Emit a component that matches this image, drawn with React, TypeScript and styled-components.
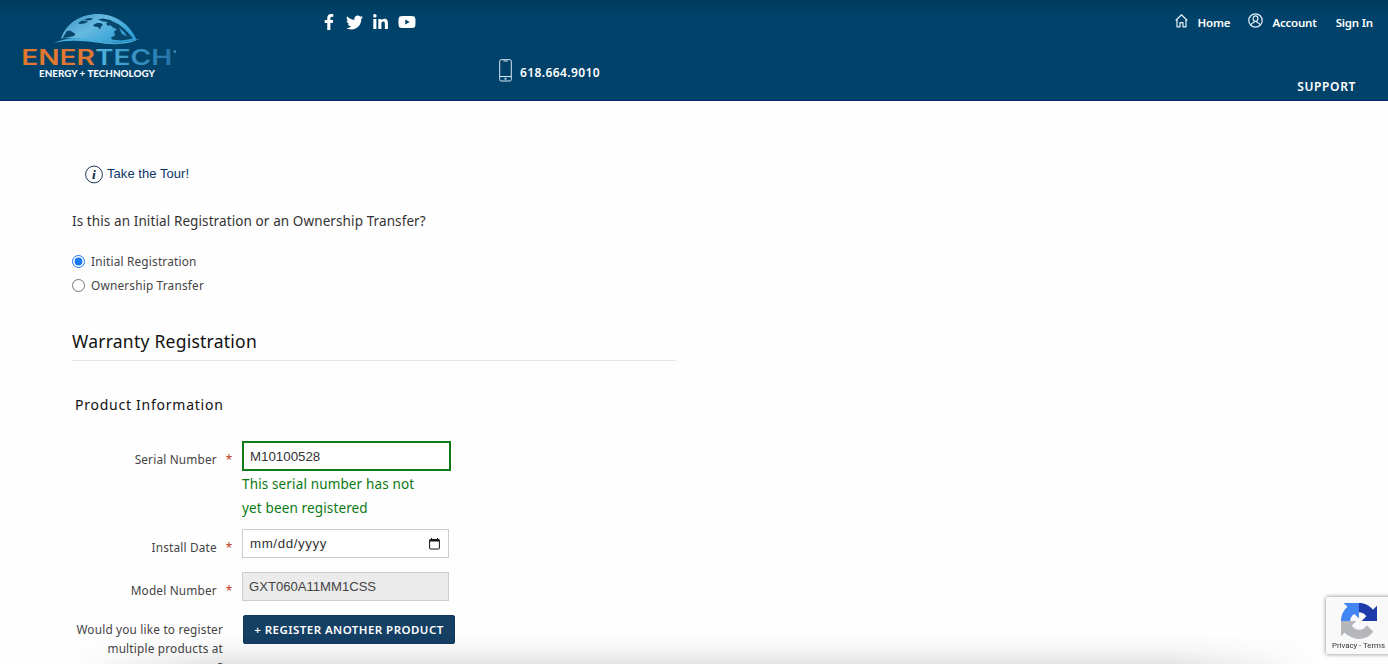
import styled, { createGlobalStyle } from 'styled-components'
import { FC, ReactNode, useState } from 'react'
import { FaFacebookF, FaTwitter, FaLinkedinIn, FaYoutube } from 'react-icons/fa'

type FieldType = {
	label: string
	height: number
	children: ReactNode
}

const Logo = () => (
	<svg width='160' height='70' viewBox='20 10 160 70'>
		<defs>
			<linearGradient id='globe' x1='0' y1='0' x2='1' y2='0.6'>
				<stop offset='0' stopColor='#3a92c4' />
				<stop offset='0.5' stopColor='#66b9e0' />
				<stop offset='1' stopColor='#2f9fd6' />
			</linearGradient>
			<linearGradient id='word' gradientUnits='userSpaceOnUse' x1='23' y1='0' x2='171' y2='0'>
				<stop offset='0' stopColor='#e4762c' />
				<stop offset='0.495' stopColor='#dd7836' />
				<stop offset='0.5' stopColor='#50b4df' />
				<stop offset='1' stopColor='#2573a9' />
			</linearGradient>
		</defs>
		<path
			d='M61 38.5C66 23 81 14 97.5 14C115 14 130 24 136.500 39.500C121 44 106 42 92 40.500C80 38.500 70 38 61 38.500Z'
			fill='url(#globe)'
		/>
		<path
			d='M53.500 43C70 36 85 38 97 40.500C113 43.500 126 43 140 38.500C126 46 110 44.500 96 42.500C81 40.500 68 39.500 53.500 43Z'
			fill='#48aedb'
		/>
		<g fill='#07466d'>
			<path d='M67 31L70 30.500L75.500 34L74 36L70 37L62.500 38.200Z' />
			<path d='M78 23L82 20.500L86 21L88 22L84 23.500L80 24Z' />
			<path d='M84 19.500L89 18L93 18.500L91 20L87 20.500Z' />
			<path d='M93 25L97 23L101 23L103 25L101 26.500L100 29.500L98 27L94 26.500Z' />
			<path d='M98 19.500L103 18.500L110 20L119 24.500L125 29.500L131 36L133 38.500L128 39.500L121 40.500L112 39.500L111 37.500L115 35.500L114 31.500L117 29.500L113 27.500L110 25L108 26L106 23.500L108 22L103 21.500Z' />
		</g>
		<path d='M119 27.500L124 32L127 36.500L122 34Z' fill='#3ba5d8' />
		<text x='21.200' y='64.700' textLength='151' lengthAdjust='spacingAndGlyphs' fill='url(#word)' fontFamily='Inter, sans-serif' fontSize='21.200' fontWeight='600'>
			ENERTECH
		</text>
		<circle cx='174.800' cy='51.500' r='1.500' fill='#3587b9' />
		<text x='39' y='77' textLength='116' lengthAdjust='spacingAndGlyphs' fill='#f4f9fd' fontFamily='Lato, sans-serif' fontSize='9.800' fontWeight='900'>
			ENERGY + TECHNOLOGY
		</text>
	</svg>
)

const PhoneIcon = () => (
	<svg width='13' height='23' viewBox='0 0 13 23' fill='none' stroke='#d5e7f5'>
		<rect x='0.700' y='0.700' width='11.600' height='21.300' rx='1.500' />
		<path d='M1 17.500H12M4.500 2H8.500' />
		<circle cx='6.500' cy='19.700' r='0.800' />
	</svg>
)

const HomeIcon = () => (
	<svg width='13' height='14' viewBox='0 0 13 14' fill='none' stroke='#e5f0f8' strokeWidth='1.200' strokeLinejoin='round'>
		<path d='M0.700 6.500L6.500 0.800L12.300 6.500M2 5.500V12.800H5V8.700H8V12.800H11V5.500' />
	</svg>
)

const AccountIcon = () => (
	<svg width='15' height='15' viewBox='0 0 15 15' fill='none' stroke='#e5f0f8' strokeWidth='1.200'>
		<circle cx='7.500' cy='7.500' r='6.700' />
		<ellipse cx='7.500' cy='5.600' rx='2.400' ry='2.800' />
		<path d='M2.700 12C3.300 10.300 4.600 9.800 6.200 9.300V8.200M8.800 8.200V9.300C10.400 9.800 11.700 10.300 12.300 12' />
	</svg>
)

const InfoIcon = () => (
	<svg width='19' height='19' viewBox='0 0 19 19'>
		<circle cx='10' cy='9.500' r='8.400' fill='none' stroke='#1c3556' strokeWidth='1' />
		<text x='10' y='13.800' textAnchor='middle' fill='#0c2748' fontFamily='Liberation Serif, serif' fontSize='13.500' fontStyle='italic' fontWeight='700'>
			i
		</text>
	</svg>
)

const CalendarIcon = () => (
	<svg width='11' height='12' viewBox='0 0 11 12' fill='none' stroke='#111'>
		<rect x='0.600' y='1.600' width='9.800' height='9.400' rx='0.800' />
		<path d='M0.500 2.500H10.500' strokeWidth='2' />
		<path d='M2.500 0V2M8.500 0V2' />
	</svg>
)

const CaptchaIcon = () => (
	<svg width='36' height='36' viewBox='0 0 64 64'>
		<path
			fill='#1c3aa9'
			d='M64 31.955l-.033-1.370V4.687l-7.160 7.160C50.948 4.674 42.033.093 32.050.093c-10.400 0-19.622 4.960-25.458 12.640l11.736 11.860a15.550 15.550 0 0 1 4.754-5.334c2.050-1.600 4.952-2.906 8.968-2.906.485 0 .860.057 1.135.163 4.976.393 9.288 3.140 11.828 7.124l-8.307 8.307L64 31.953'
		/>
		<path
			fill='#4285f4'
			d='M31.862.094l-1.370.033H4.594l7.160 7.160C4.580 13.147 0 22.060 0 32.046c0 10.400 4.960 19.622 12.640 25.458L24.500 45.768a15.550 15.550 0 0 1-5.334-4.754c-1.600-2.050-2.906-4.952-2.906-8.968 0-.485.057-.860.163-1.135.393-4.976 3.140-9.288 7.124-11.828l8.307 8.307L31.860.095'
		/>
		<path
			fill='#b5b7ba'
			d='M.001 32.045l.033 1.370v25.898l7.160-7.160c5.860 7.173 14.774 11.754 24.760 11.754 10.400 0 19.622-4.960 25.458-12.640l-11.736-11.860a15.550 15.550 0 0 1-4.754 5.334c-2.050 1.600-4.952 2.906-8.968 2.906-.485 0-.860-.057-1.135-.163-4.976-.393-9.288-3.140-11.828-7.124l8.307-8.307c-10.522.040-22.400.066-27.295-.005'
		/>
	</svg>
)

const Field: FC<FieldType> = (props: FieldType) => (
	<Row $height={props.height}>
		<Label>
			{props.label}
			<Star>*</Star>
		</Label>
		<Control>{props.children}</Control>
	</Row>
)

export default function App() {
	const [kind, setKind] = useState('initial')
	const [serial, setSerial] = useState('M10100528')

	return (
		<Page>
			<GlobalStyle />
			<Header>
				<LogoBox>
					<Logo />
				</LogoBox>
				<Socials>
					<FaFacebookF size={16} />
					<FaTwitter size={17} />
					<FaLinkedinIn size={17} />
					<FaYoutube size={18} />
				</Socials>
				<Phone>
					<PhoneIcon />
					<span>618.664.9010</span>
				</Phone>
				<Right>
					<Nav>
						<HomeIcon />
						<NavText $left={10}>Home</NavText>
						<NavIcon>
							<AccountIcon />
						</NavIcon>
						<NavText $left={9}>Account</NavText>
						<NavText $left={19}>Sign In</NavText>
					</Nav>
					<Support>SUPPORT</Support>
				</Right>
			</Header>
			<Main>
				<Tour>
					<InfoIcon />
					<span>Take the Tour!</span>
				</Tour>
				<Question>Is this an Initial Registration or an Ownership Transfer?</Question>
				<Radio>
					<input type='radio' checked={kind === 'initial'} onChange={() => setKind('initial')} />
					Initial Registration
				</Radio>
				<Radio>
					<input type='radio' checked={kind === 'transfer'} onChange={() => setKind('transfer')} />
					Ownership Transfer
				</Radio>
				<Title>Warranty Registration</Title>
				<SubTitle>Product Information</SubTitle>
				<Field label='Serial Number' height={88}>
					<SerialInput value={serial} onChange={(e) => setSerial(e.currentTarget.value)} />
					<Message>This serial number has not yet been registered</Message>
				</Field>
				<Field label='Install Date' height={43}>
					<DateBox>
						<span>mm/dd/yyyy</span>
						<CalendarIcon />
					</DateBox>
				</Field>
				<Field label='Model Number' height={43}>
					<ModelInput value='GXT060A11MM1CSS' readOnly />
				</Field>
				<Row $height={60}>
					<MultiLabel>
						Would you like to register
						<br />
						multiple products at
						<br />?
					</MultiLabel>
					<Control>
						<AddButton>+ REGISTER ANOTHER PRODUCT</AddButton>
					</Control>
				</Row>
			</Main>
			<BottomShade />
			<Captcha>
				<CaptchaIcon />
				<CaptchaText>Privacy - Terms</CaptchaText>
			</Captcha>
		</Page>
	)
}

const GlobalStyle = createGlobalStyle`
	* {
		box-sizing: border-box;
	}
	body {
		margin: 0;
		overflow: hidden;
		background-color: #fefefe;
		font-family: 'Noto Sans', sans-serif;
		color: #333;
	}
	svg {
		display: block;
		flex-shrink: 0;
	}
`
const Page = styled.div`
	height: 664px;
	overflow: hidden;
`
const Header = styled.header`
	display: flex;
	height: 101px;
	color: #ffffff;
	background: linear-gradient(#003a5f 0, #00426a 14px, #00426a 100%);
	border-bottom: 1px solid #11217a;
`
const LogoBox = styled.div`
	padding: 10px 0 0 20px;
	width: 321px;
`
const Socials = styled.div`
	display: flex;
	align-items: center;
	gap: 9px;
	width: 178px;
	height: 44px;
`
const Phone = styled.div`
	display: flex;
	align-items: flex-start;
	gap: 8px;
	padding-top: 59px;
	font-size: 12px;
	font-weight: 600;
	letter-spacing: 0.4px;
	line-height: 27px;
`
const Right = styled.div`
	display: flex;
	flex-direction: column;
	align-items: flex-end;
	margin-left: auto;
	padding: 14px 15px 0 0;
`
const Nav = styled.nav`
	display: flex;
	align-items: flex-start;
	height: 63px;
	font-size: 11.5px;
	font-weight: 600;
	letter-spacing: -0.2px;
	line-height: 18px;
`
const NavText = styled.span<{ $left: number }>`
	margin-left: ${(props) => props.$left}px;
`
const NavIcon = styled.span`
	margin: -1px 0 0 18px;
`
const Support = styled.div`
	margin-right: 17px;
	font-size: 12px;
	font-weight: 600;
	letter-spacing: 0.65px;
	line-height: 20px;
`
const Main = styled.main`
	padding: 64px 0 0 72px;
`
const Tour = styled.div`
	display: flex;
	gap: 4px;
	height: 19px;
	margin-left: 12px;
	font-family: 'Liberation Sans', sans-serif;
	font-size: 13px;
	letter-spacing: 0.05px;
	line-height: 17px;
	color: #0b3566;
`
const Question = styled.p`
	margin: 25px 0 16px;
	font-size: 13.5px;
	letter-spacing: 0.1px;
	line-height: 24px;
`
const Radio = styled.label`
	display: flex;
	align-items: center;
	gap: 6px;
	height: 24px;
	font-size: 11.8px;
	letter-spacing: 0.2px;
	color: #444;
	& input {
		width: 13px;
		height: 13px;
		margin: 0;
		accent-color: #1877f2;
	}
`
const Title = styled.h2`
	width: 604px;
	height: 34px;
	margin: 30px 0 32px;
	border-bottom: 1px solid #e6e6e6;
	font-size: 17.5px;
	font-weight: 400;
	letter-spacing: 0.24px;
	line-height: 29px;
	color: #111;
`
const SubTitle = styled.h3`
	margin: 0 0 24px 3px;
	font-size: 14px;
	font-weight: 400;
	letter-spacing: 0.75px;
	line-height: 24px;
	color: #111;
`
const Row = styled.div<{ $height: number }>`
	display: flex;
	align-items: flex-start;
	height: ${(props) => props.$height}px;
`
const Label = styled.label`
	display: flex;
	justify-content: flex-end;
	width: 160.5px;
	padding-top: 8px;
	font-size: 11.8px;
	letter-spacing: 0.18px;
	line-height: 20px;
	color: #444;
`
const Star = styled.span`
	margin-left: 9px;
	color: #c0392b;
`
const Control = styled.div`
	margin-left: auto;
	width: 1146px;
`
const SerialInput = styled.input`
	display: block;
	width: 209px;
	height: 30px;
	padding: 0 6px;
	border: 2px solid #0f7a16;
	outline: none;
	background-color: #ffffff;
	font-family: 'Liberation Sans', sans-serif;
	font-size: 13.3px;
	color: #333;
`
const Message = styled.p`
	width: 190px;
	margin: 1px 0 0;
	font-size: 13.5px;
	letter-spacing: 0.14px;
	line-height: 24px;
	color: #0a7a12;
`
const DateBox = styled.div`
	display: flex;
	align-items: center;
	justify-content: space-between;
	width: 207px;
	height: 29px;
	padding: 0 8px 0 7px;
	border: 1px solid #ccc;
	background-color: #ffffff;
	font-family: 'Liberation Sans', sans-serif;
	font-size: 13.3px;
	letter-spacing: 0.6px;
`
const ModelInput = styled.input`
	display: block;
	width: 207px;
	height: 29px;
	padding: 0 6px;
	border: 1px solid #ccc;
	background-color: #ebebeb;
	font-family: 'Liberation Sans', sans-serif;
	font-size: 13.1px;
	color: #444;
`
const MultiLabel = styled.div`
	width: 151px;
	padding-top: 5px;
	font-size: 11.8px;
	letter-spacing: 0.19px;
	line-height: 19px;
	text-align: right;
	white-space: nowrap;
	color: #444;
`
const AddButton = styled.button`
	display: block;
	width: 212px;
	height: 29px;
	margin-left: 1px;
	padding: 0;
	border: 1px solid #123a5c;
	border-radius: 2px;
	background-color: #153f63;
	font-family: 'Noto Sans', sans-serif;
	font-size: 11.5px;
	font-weight: 600;
	letter-spacing: 0.45px;
	color: #ffffff;
	white-space: nowrap;
`
// soft fade along the lower edge of the window
const BottomShade = styled.div`
	position: fixed;
	left: 70px;
	right: 70px;
	bottom: 0;
	height: 30px;
	background: linear-gradient(rgba(0, 0, 0, 0), rgba(0, 0, 0, 0.04) 55%, rgba(0, 0, 0, 0.1));
	mask-image: linear-gradient(90deg, transparent, #000 12%, #000 88%, transparent);
	pointer-events: none;
`
const Captcha = styled.div`
	position: fixed;
	right: -8px;
	bottom: 10px;
	display: flex;
	flex-direction: column;
	width: 70px;
	height: 57px;
	padding: 6px 0 0 15px;
	border-radius: 2px;
	background-color: #f9f9f9;
	box-shadow: 0 0 4px #808080;
`
const CaptchaText = styled.span`
	margin: 2px 0 0 -9px;
	font-family: Roboto, sans-serif;
	font-size: 7.8px;
	line-height: 10px;
	white-space: nowrap;
	color: #333;
`
